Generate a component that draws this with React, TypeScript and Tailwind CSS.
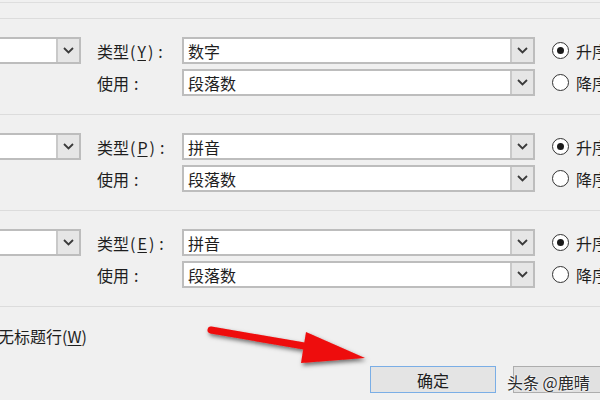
import React from "react";

const font = { fontFamily: '"Noto Sans CJK SC", "Noto Sans", sans-serif' };

const Chevron = () => (
  <svg width="11" height="7" viewBox="0 0 11 7" fill="none">
    <path d="M1 1 L5.5 5.5 L10 1" stroke="#3a3a3a" strokeWidth="1.8" />
  </svg>
);

const Combo = ({ text, className = "" }: { text?: string; className?: string }) => (
  <div className={`flex h-[27px] shrink-0 items-stretch border-2 border-[#bdbdbd] bg-white ${className}`}>
    <div className="flex flex-1 items-center pl-[4px] text-[16px] text-[#1e1e1e]">{text}</div>
    <div className="flex w-[23px] items-center justify-center border-l-2 border-[#c9c9c9] bg-[#e6e6e6]">
      <Chevron />
    </div>
  </div>
);

const Radio = ({ checked, label }: { checked?: boolean; label: string }) => (
  <div className="flex shrink-0 items-center">
    <div className="flex h-[17px] w-[17px] shrink-0 items-center justify-center rounded-full border border-[#333] bg-white">
      {checked && <div className="h-[7px] w-[7px] rounded-full bg-[#1a1a1a]" />}
    </div>
    <span className="ml-[7px] whitespace-nowrap text-[16px] text-[#1e1e1e]">{label}</span>
  </div>
);

const Label = ({ text, hot }: { text: string; hot?: string }) => (
  <div className="ml-[16px] w-[85px] shrink-0 whitespace-nowrap text-[16px] text-[#1e1e1e]">
    {text}
    {hot && (
      <>
        <span className="ml-[1px]">(</span>
        <span className="mx-[2px] underline underline-offset-2">{hot}</span>
        <span>)</span>
      </>
    )}
    <span className="ml-[5px]">:</span>
  </div>
);

const sections = [
  { key: "Y", type: "数字", use: "段落数" },
  { key: "P", type: "拼音", use: "段落数" },
  { key: "E", type: "拼音", use: "段落数" },
];

export default function App() {
  return (
    <div className="relative h-[400px] w-[600px] overflow-hidden bg-[#f0f0f0]" style={font}>
      <div className="h-[2px]" />
      <div className="h-px bg-[#dedede]" />
      <div className="h-[15px]" />
      {sections.map((s) => (
        <div key={s.key} className="h-[96px]">
          <div className="h-px bg-[#dcdcdc]" />
          <div className="flex flex-col gap-[5px] pt-[18px]">
            <div className="flex items-center">
              <Combo className="w-[81px] border-l-0" />
              <Label text="类型" hot={s.key} />
              <Combo className="w-[353px]" text={s.type} />
              <div className="ml-[17px] shrink-0">
                <Radio checked label="升序" />
              </div>
            </div>
            <div className="flex items-center">
              <div className="w-[81px] shrink-0" />
              <Label text="使用" />
              <Combo className="w-[353px]" text={s.use} />
              <div className="ml-[17px] shrink-0">
                <Radio label="降序" />
              </div>
            </div>
          </div>
        </div>
      ))}
      <div className="h-px bg-[#dcdcdc]" />
      <div className="ml-[-2px] mt-[18px] flex h-[22px] items-center whitespace-nowrap text-[16px] text-[#1e1e1e]">
        无标题行(<span className="underline underline-offset-2">W</span>)
      </div>
      <div className="mt-[19px] flex">
        <div className="ml-[370px] flex h-[27px] w-[126px] shrink-0 items-center justify-center border border-[#7aaee6] bg-[#e4e4e4] text-[16px] text-[#1e1e1e]">
          确定
        </div>
        <div className="ml-[17px] h-[27px] w-[120px] shrink-0 border border-[#adadad] bg-[#e1e1e1]" />
      </div>
      <div
        className="absolute left-[507px] top-[370px] whitespace-nowrap text-[16px] text-[#2a2a2a]"
        style={{ textShadow: "0 0 2px #fff, 0 0 2px #fff" }}
      >
        头条 @鹿晴
      </div>
      <svg className="absolute left-0 top-0" width="600" height="400" viewBox="0 0 600 400">
        <defs>
          <filter id="sh" x="-20%" y="-50%" width="140%" height="200%">
            <feDropShadow dx="1.5" dy="2.5" stdDeviation="2" floodColor="#000" floodOpacity="0.55" />
          </filter>
        </defs>
        <g filter="url(#sh)">
          <line x1="211" y1="330" x2="316" y2="348" stroke="#ee0a0a" strokeWidth="7" strokeLinecap="round" />
          <polygon points="306,332 365,358 301,363" fill="#ee0a0a" />
        </g>
      </svg>
    </div>
  );
}
